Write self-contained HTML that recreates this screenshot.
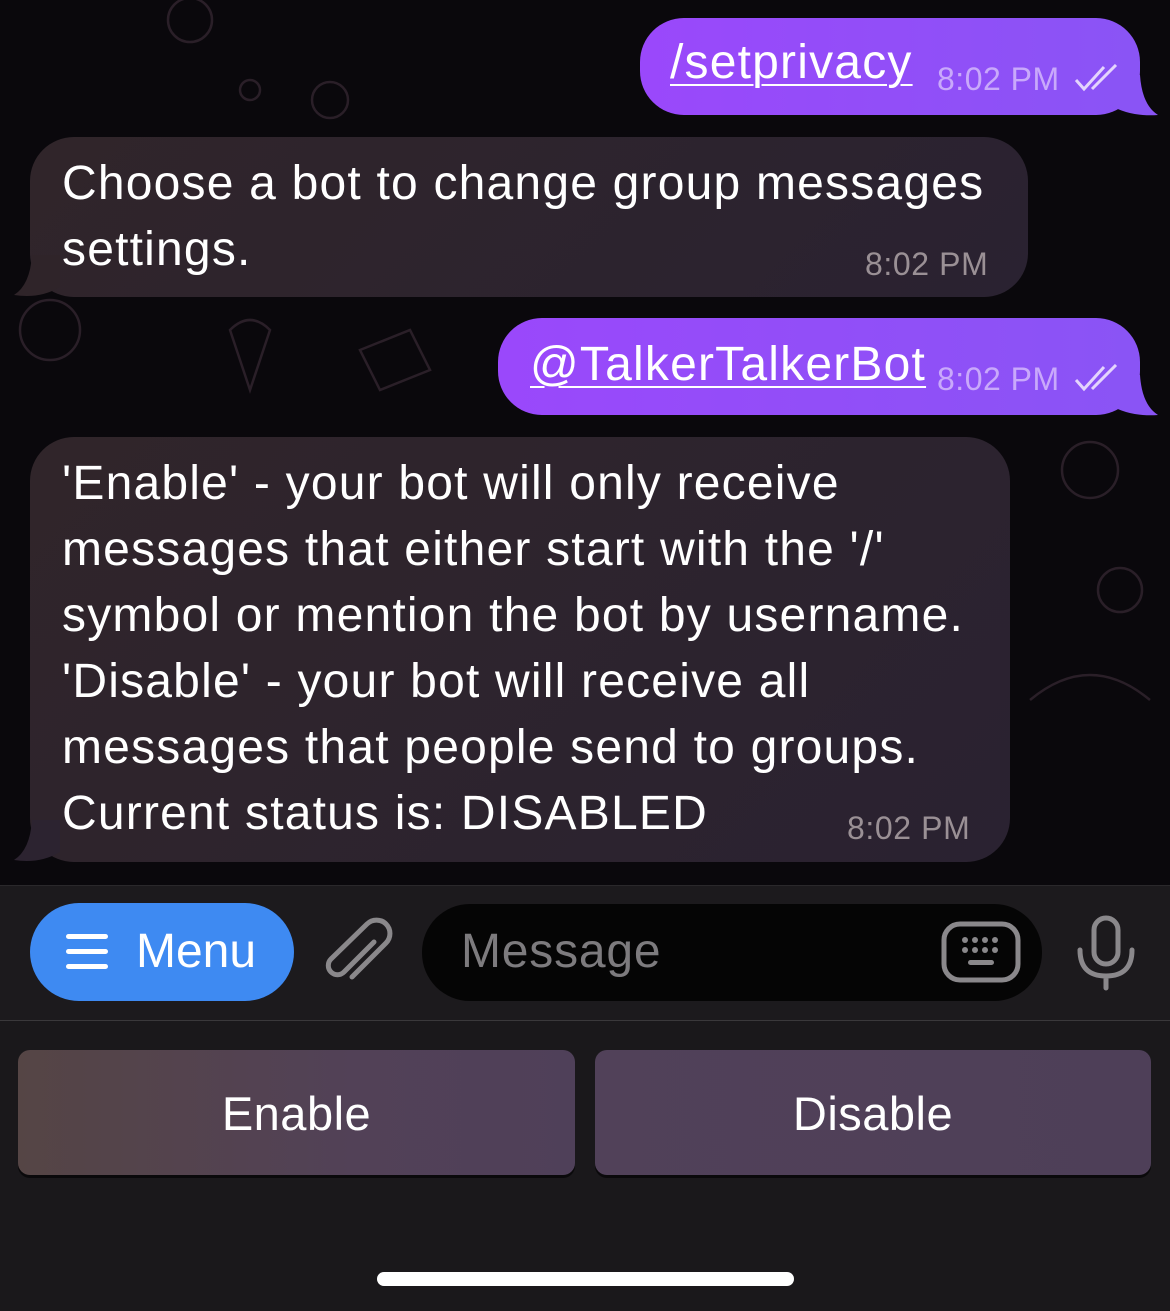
<!DOCTYPE html>
<html><head><meta charset="utf-8"><style>
*{margin:0;padding:0;box-sizing:border-box}
body{width:1170px;height:1311px;background:#0a080c;font-family:"Liberation Sans",sans-serif;position:relative;overflow:hidden;color:#fff}
.b{position:absolute;border-radius:44px}
.in{background:linear-gradient(135deg,#30252a,#2a2231);}
.out{background:linear-gradient(90deg,#9a48fb,#8a54f5);}
.t{position:absolute;font-size:48px;letter-spacing:1.2px;line-height:66px;white-space:nowrap}
.tm{position:absolute;font-size:32px;letter-spacing:0.6px;color:#9a9095}
.tmo{position:absolute;font-size:32px;letter-spacing:0.5px;color:#c9a9fb}
u{text-decoration-thickness:2px;text-underline-offset:6px}
.btn{position:absolute;top:1050px;height:125px;border-radius:12px;font-size:47px;letter-spacing:0.5px;text-align:center;line-height:128px;box-shadow:0 3px 0 #0a090b}
</style></head><body>
<svg width="1170" height="885" style="position:absolute;left:0;top:0" fill="none" stroke="#2a1f28" stroke-width="2.5">
<circle cx="190" cy="20" r="22"/><circle cx="330" cy="100" r="18"/><circle cx="50" cy="330" r="30"/><circle cx="1090" cy="470" r="28"/><circle cx="1120" cy="590" r="22"/><path d="M1030 700 q60 -50 120 0"/><path d="M360 350 l50 -20 l20 40 l-50 20z"/><path d="M230 330 q20 -20 40 0 l-20 60z"/><circle cx="250" cy="90" r="10"/><circle cx="1010" cy="160" r="8"/>
</svg>
<!-- bubble 1 -->
<div class="b out" style="left:640px;top:18px;width:500px;height:97px"></div>
<svg style="position:absolute;left:1110px;top:75px" width="50" height="45"><path d="M0 0 L30 0 Q32 30 48 40 Q20 42 0 30Z" fill="#8a54f5"/></svg>
<div class="t" style="left:670px;top:30px"><u>/setprivacy</u></div>
<div class="tmo" style="left:937px;top:61px">8:02 PM</div>
<svg style="position:absolute;left:1074px;top:64px" width="46" height="30" stroke="#e4d4fd" stroke-width="3" fill="none"><path d="M2 16 l8 9 l20 -22 M18 25 l24 -24"/></svg>
<!-- bubble 2 -->
<div class="b in" style="left:30px;top:137px;width:998px;height:160px"></div>
<svg style="position:absolute;left:10px;top:255px" width="50" height="45"><path d="M50 0 L22 0 Q20 30 4 40 Q30 44 50 32Z" fill="#2f2429"/></svg>
<div class="t" style="left:62px;top:151px">Choose a bot to change group messages<br>settings.</div>
<div class="tm" style="left:865px;top:246px">8:02 PM</div>
<!-- bubble 3 -->
<div class="b out" style="left:498px;top:318px;width:642px;height:97px"></div>
<svg style="position:absolute;left:1110px;top:375px" width="50" height="45"><path d="M0 0 L30 0 Q32 30 48 40 Q20 42 0 30Z" fill="#8a54f5"/></svg>
<div class="t" style="left:530px;top:332px"><u>@TalkerTalkerBot</u></div>
<div class="tmo" style="left:937px;top:361px">8:02 PM</div>
<svg style="position:absolute;left:1074px;top:364px" width="46" height="30" stroke="#e4d4fd" stroke-width="3" fill="none"><path d="M2 16 l8 9 l20 -22 M18 25 l24 -24"/></svg>
<!-- bubble 4 -->
<div class="b in" style="left:30px;top:437px;width:980px;height:425px"></div>
<svg style="position:absolute;left:10px;top:820px" width="50" height="45"><path d="M50 0 L22 0 Q20 30 4 40 Q30 44 50 32Z" fill="#2c2330"/></svg>
<div class="t" style="left:62px;top:451px">'Enable' - your bot will only receive<br>messages that either start with the '/'<br>symbol or mention the bot by username.<br>'Disable' - your bot will receive all<br>messages that people send to groups.<br>Current status is: DISABLED</div>
<div class="tm" style="left:847px;top:810px">8:02 PM</div>
<!-- input panel -->
<div style="position:absolute;left:0;top:885px;width:1170px;height:136px;background:#1c1a1d;border-top:1px solid #2a282b;border-bottom:1px solid #3a383b"></div>
<div style="position:absolute;left:30px;top:903px;width:264px;height:98px;border-radius:49px;background:#3e8af2"></div>
<svg style="position:absolute;left:64px;top:932px" width="48" height="40" fill="#fff"><rect x="2" y="2" width="42" height="5" rx="2.5"/><rect x="2" y="17" width="42" height="5" rx="2.5"/><rect x="2" y="32" width="42" height="5" rx="2.5"/></svg>
<div style="position:absolute;left:136px;top:924px;font-size:48px">Menu</div>
<svg style="position:absolute;left:322px;top:914px" width="75" height="75" fill="none" stroke="#8a888b" stroke-width="5" stroke-linecap="round"><path d="M52 28 L22 58 a9 9 0 0 1 -13 -13 L45 10 a13 13 0 0 1 19 19 L30 63"/></svg>
<div style="position:absolute;left:422px;top:904px;width:620px;height:97px;border-radius:48px;background:#050505"></div>
<div style="position:absolute;left:461px;top:924px;font-size:48px;letter-spacing:0.8px;color:#7d7b7e">Message</div>
<svg style="position:absolute;left:940px;top:920px" width="82" height="64" fill="none" stroke="#8a888b" stroke-width="5"><rect x="4" y="4" width="74" height="56" rx="16"/><g fill="#8a888b" stroke="none"><circle cx="25" cy="20" r="3"/><circle cx="35" cy="20" r="3"/><circle cx="45" cy="20" r="3"/><circle cx="55" cy="20" r="3"/><circle cx="25" cy="30" r="3"/><circle cx="35" cy="30" r="3"/><circle cx="45" cy="30" r="3"/><circle cx="55" cy="30" r="3"/><rect x="28" y="40" width="26" height="5" rx="2.5"/></g></svg>
<svg style="position:absolute;left:1074px;top:914px" width="64" height="78" fill="none" stroke="#8a888b" stroke-width="5" stroke-linecap="round"><rect x="20" y="4" width="24" height="46" rx="12"/><path d="M6 36 q0 26 26 26 q26 0 26 -26 M32 62 v12"/></svg>
<!-- keyboard -->
<div style="position:absolute;left:0;top:1021px;width:1170px;height:290px;background:#1a181b"></div>
<div class="btn" style="left:18px;width:557px;background:linear-gradient(90deg,#554545,#524157 60%,#4f4059)">Enable</div>
<div class="btn" style="left:595px;width:556px;background:linear-gradient(90deg,#514159,#4e3f58)">Disable</div>
<div style="position:absolute;left:377px;top:1272px;width:417px;height:14px;border-radius:7px;background:#fff"></div>
</body></html>
